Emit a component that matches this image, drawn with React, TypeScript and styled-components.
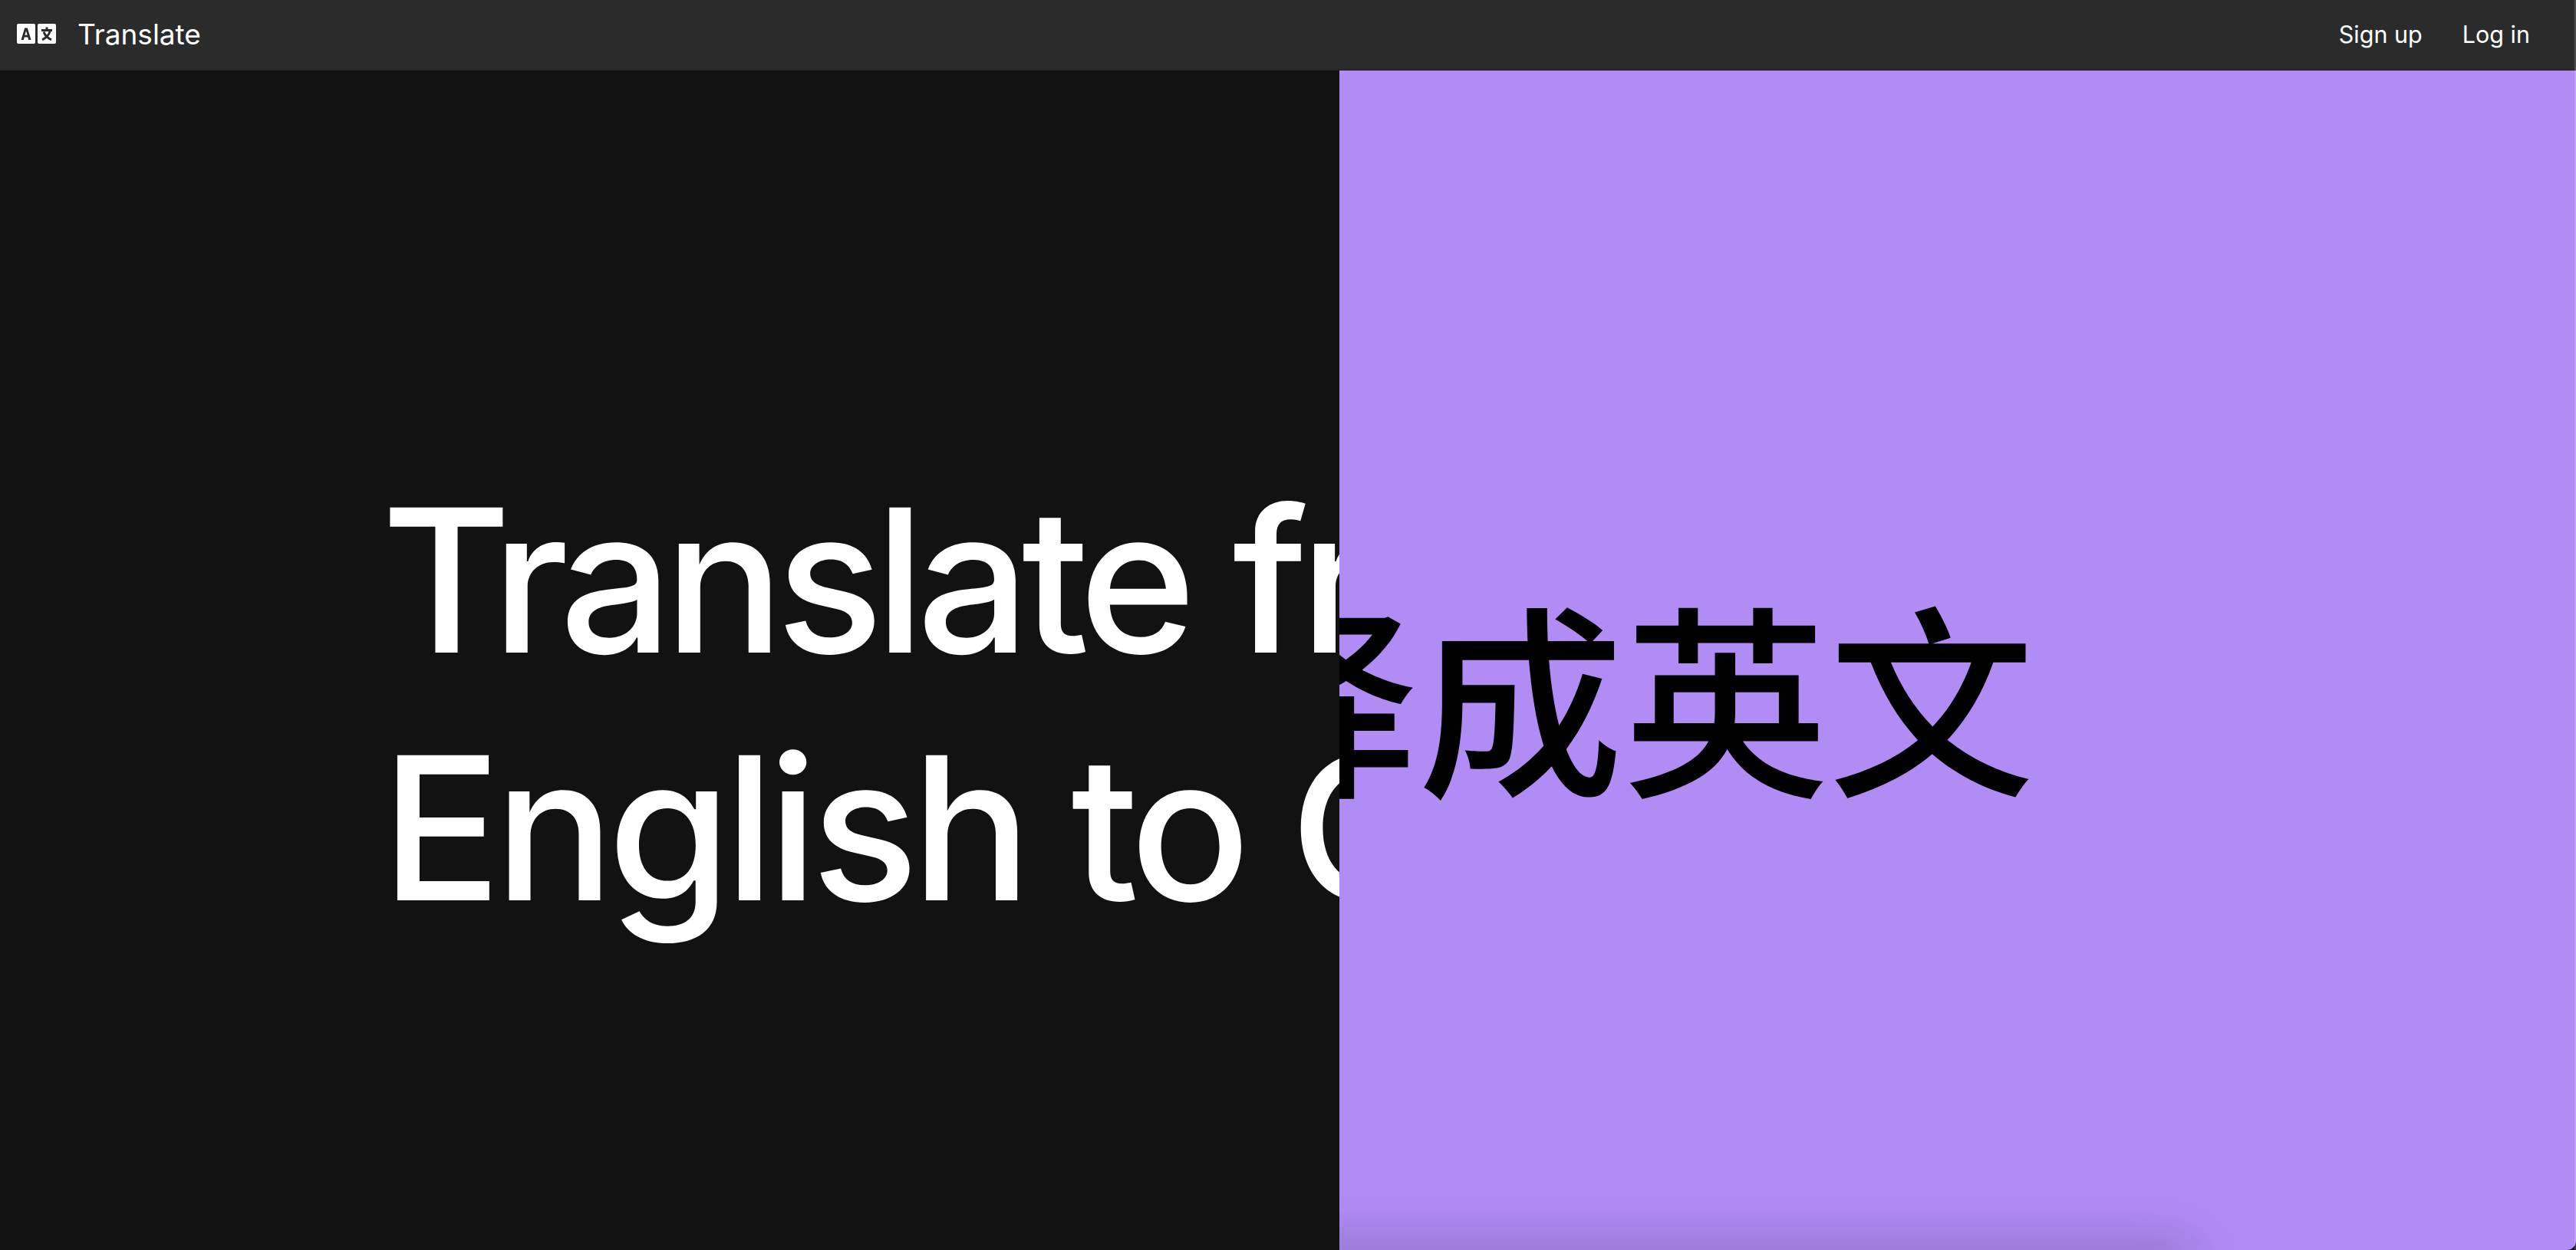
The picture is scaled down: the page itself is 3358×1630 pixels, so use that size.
import React from "react";
import styled, { createGlobalStyle } from "styled-components";

const Global = createGlobalStyle`
  html, body { margin: 0; padding: 0; height: 100%; background: #121212; overflow: hidden; }
  * { box-sizing: border-box; }
`;

const Page = styled.div`
  position: relative;
  height: 1630px;
  display: flex;
  flex-direction: column;
  font-family: Inter, "Noto Sans CJK SC", sans-serif;
  background: #121212;

  &::after {
    content: "";
    position: absolute;
    top: 0;
    bottom: 0;
    right: 0;
    width: 2px;
    background: rgba(255, 255, 255, 0.18);
  }
`;

const Nav = styled.header`
  height: 92px;
  flex: none;
  display: flex;
  align-items: center;
  justify-content: space-between;
  padding: 0 60px 2px 22px;
  background: #2b2b2b;
  border-bottom: 2px solid #262626;
  color: #fff;
`;

const Brand = styled.div`
  display: flex;
  align-items: center;
  gap: 28px;
  font-size: 37px;
`;

const Links = styled.nav`
  display: flex;
  gap: 52px;
  font-size: 30.5px;
`;

const Stage = styled.main`
  position: relative;
  flex: 1;
  overflow: hidden;
  display: flex;
  align-items: center;
  padding-top: 114px;
`;

const LightHeading = styled.h1`
  margin: 0;
  padding-left: 497px;
  font-weight: 500;
  font-size: 260px;
  line-height: 323px;
  white-space: nowrap;
  color: #fff;
`;

const HeadingLine = styled.span<{ $tracking: number }>`
  display: block;
  letter-spacing: ${(p) => p.$tracking}px;
`;

const Overlay = styled.section`
  position: absolute;
  inset: 0 0 0 1746px;
  overflow: hidden;
  background: #b18cf5;
  border-bottom-right-radius: 12px;
  display: flex;
  align-items: center;
  padding-top: 82px;

  &::after {
    content: "";
    position: absolute;
    left: -100px;
    right: 500px;
    top: 100%;
    height: 40px;
    border-radius: 30px;
    box-shadow: 0 0 70px 10px rgba(0, 0, 0, 0.2);
  }
`;

const DarkHeading = styled.h2`
  margin: 0 0 0 -166px;
  font-family: "Noto Sans CJK SC", sans-serif;
  font-weight: 500;
  font-size: 268px;
  line-height: 323px;
  white-space: nowrap;
  color: #000;
`;

const LogoIcon = () => (
  <svg width="51" height="26" viewBox="0 0 51 26" aria-hidden="true">
    <rect x="0" y="0" width="24" height="26" rx="2" fill="#fff" />
    <rect x="27" y="0" width="24" height="26" rx="2" fill="#fff" />
    <path d="M5.5 21 L10.2 5.5 H13.8 L18.5 21 H15.2 L14.3 17.6 H9.7 L8.8 21 Z M10.4 14.8 H13.6 L12 9.3 Z" fill="#2b2b2b" />
    <path d="M32 8.5 H46 M39 4.5 V8.5 M43.5 8.5 C42.5 13.5 38 18.5 33 20.8 M35 10.5 C36.5 15 40.5 18.8 45 20.8" fill="none" stroke="#2b2b2b" strokeWidth="3" />
  </svg>
);

export default function App() {
  return (
    <Page>
      <Global />
      <Nav>
        <Brand>
          <LogoIcon />
          <span>Translate</span>
        </Brand>
        <Links>
          <span>Sign up</span>
          <span>Log in</span>
        </Links>
      </Nav>
      <Stage>
        <LightHeading>
          <HeadingLine $tracking={-11}>Translate from</HeadingLine>
          <HeadingLine $tracking={-9}>English to Chinese</HeadingLine>
        </LightHeading>
        <Overlay>
          <DarkHeading>译成英文</DarkHeading>
        </Overlay>
      </Stage>
    </Page>
  );
}
